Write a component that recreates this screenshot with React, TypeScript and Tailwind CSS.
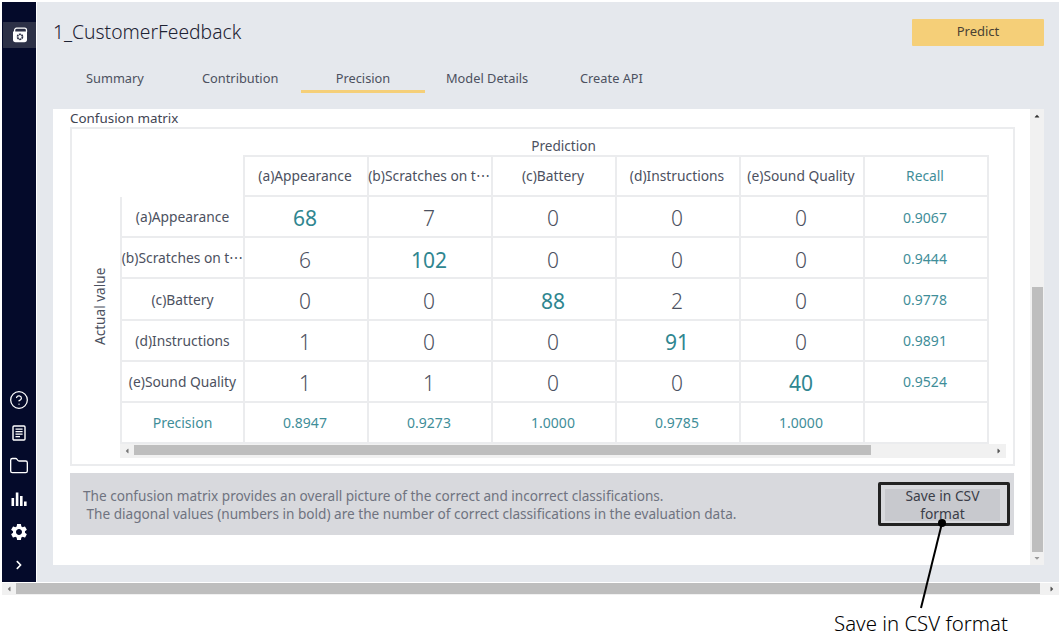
import { CircleHelp, Folder } from "lucide-react"
import { FaCaretDown, FaCaretLeft, FaCaretRight, FaCaretUp, FaChevronRight } from "react-icons/fa"
import { MdSettings } from "react-icons/md"

const labels = ["(a)Appearance", "(b)Scratches on t⋯", "(c)Battery", "(d)Instructions", "(e)Sound Quality"]
const matrix = [
  [68, 7, 0, 0, 0],
  [6, 102, 0, 0, 0],
  [0, 0, 88, 2, 0],
  [1, 0, 0, 91, 0],
  [1, 1, 0, 0, 40],
]
const recall = ["0.9067", "0.9444", "0.9778", "0.9891", "0.9524"]
const precision = ["0.8947", "0.9273", "1.0000", "0.9785", "1.0000"]

function ModelIcon() {
  return (
    <svg width="16" height="16" viewBox="0 0 16 16">
      <path d="M2.6 5 V3.4 A2 2 0 0 1 4.6 1.2 H12.5 A2 2 0 0 1 14.5 3.2 V5" fill="none" stroke="#fff" strokeWidth="1.3" />
      <path d="M1 4.4 H15 V12.6 a2.6 2.6 0 0 1 -2.6 2.6 H3.6 A2.6 2.6 0 0 1 1 12.6 Z" fill="#fff" />
      <circle cx="8" cy="9.8" r="2.5" fill="none" stroke="#2d3147" strokeWidth="1.7" strokeDasharray="2 0.6" />
    </svg>
  )
}

function NotesIcon() {
  return (
    <svg width="16" height="16" viewBox="0 0 16 16" fill="none" stroke="#fff">
      <rect x="2" y="1" width="12" height="14" rx="1" strokeWidth="1.4" />
      <path d="M4.5 4.2 H11.6 M4.5 6.7 H11.6 M4.5 9.2 H11.6 M4.5 11.7 H9" strokeWidth="1.3" />
    </svg>
  )
}

function BarsIcon() {
  return (
    <svg width="16" height="16" viewBox="0 0 16 16" fill="#fff">
      <rect x="0.5" y="7" width="2.6" height="8" />
      <rect x="4.8" y="1.5" width="2.6" height="13.5" />
      <rect x="9" y="5" width="2.6" height="10" />
      <rect x="13" y="10.5" width="2.6" height="4.5" />
    </svg>
  )
}

function NavSlot({ children }: { children: React.ReactNode }) {
  return <div className="h-[33px] flex items-center justify-center">{children}</div>
}

function Sidebar() {
  return (
    <div className="w-[34px] shrink-0 flex flex-col bg-[#040a2a] mr-[1px]">
      <div className="mt-[20px] h-[26px] w-[33px] ml-[1px] bg-[#2d3147] flex items-center justify-center">
        <ModelIcon />
      </div>
      <div className="mt-auto pb-[1px] flex flex-col items-center">
        <NavSlot><CircleHelp size={20} color="#fff" strokeWidth={1.5} /></NavSlot>
        <NavSlot><NotesIcon /></NavSlot>
        <NavSlot><Folder size={20} color="#fff" strokeWidth={1.6} /></NavSlot>
        <NavSlot><BarsIcon /></NavSlot>
        <NavSlot><MdSettings size={20} color="#fff" /></NavSlot>
        <NavSlot><FaChevronRight size={10} color="#fff" /></NavSlot>
      </div>
    </div>
  )
}

function Cell({ children, className = "" }: { children?: React.ReactNode; className?: string }) {
  return (
    <div className={`w-[124px] h-full shrink-0 flex items-center justify-center border-r-2 border-[#ebecee] whitespace-nowrap pr-[2px] ${className}`}>
      {children}
    </div>
  )
}

function MatrixTable() {
  return (
    <div>
      <div className="flex h-[42px]">
        <div className="w-[125px] shrink-0" />
        <div className="flex border-t-2 border-b-2 border-l-2 border-[#ebecee] text-[13.8px] text-[#4c5160] h-full -ml-[2px]">
          {labels.map((h) => (
            <Cell key={h}>{h}</Cell>
          ))}
          <Cell className="text-[#3f8e99]">Recall</Cell>
        </div>
      </div>
      {matrix.map((row, i) => (
        <div key={labels[i]} className="flex h-[41.2px] border-b-2 border-l-2 border-[#ebecee] w-[869px]">
          <div className="w-[123px] h-full shrink-0 flex items-center justify-center border-r-2 border-[#ebecee] text-[13.8px] text-[#4c5160] whitespace-nowrap pt-[2px]">
            {labels[i]}
          </div>
          {row.map((v, j) => (
            <Cell key={j} className={i === j ? "text-[21px] text-[#2f8690] pt-[5px]" : "text-[21px] font-light text-[#4c5160] pt-[5px]"}>
              {v}
            </Cell>
          ))}
          <Cell className="text-[14px] text-[#3f8e99] pt-[1px]">{recall[i]}</Cell>
        </div>
      ))}
      <div className="flex h-[41.2px] border-l-2 border-b-2 border-[#ebecee] w-[869px] text-[14px] text-[#3f8e99]">
        <div className="w-[123px] h-full shrink-0 flex items-center justify-center border-r-2 border-[#ebecee]">Precision</div>
        {precision.map((p, i) => (
          <Cell key={i}>{p}</Cell>
        ))}
        <Cell />
      </div>
    </div>
  )
}

function HScroll({ className = "", thumb }: { className?: string; thumb: string }) {
  return (
    <div className={`flex items-center bg-[#f1f1f1] ${className}`}>
      <div className="w-[14px] shrink-0 flex justify-center text-[#777]">
        <FaCaretLeft size={8} />
      </div>
      <div className="flex-1 h-full">
        <div className={`bg-[#bebebe] ${thumb}`} />
      </div>
      <div className="w-[14px] shrink-0 flex justify-center text-[#555]">
        <FaCaretRight size={8} />
      </div>
    </div>
  )
}

export default function App() {
  return (
    <div className="relative w-[1061px] h-[633px] overflow-hidden bg-white pt-[2px] pl-[2px] pr-[2px] font-['Noto_Sans','Open_Sans',sans-serif]">
      <div className="flex h-[580px]">
        <Sidebar />
        <div className="flex-1 min-w-0 bg-[#e5e8ed] pl-[16px] pr-[15px] flex flex-col">
          {/* header row */}
          <div className="flex items-center justify-between h-[60px] shrink-0">
            <h1 className="text-[19.3px] font-light text-[#1d2233]">1_CustomerFeedback</h1>
            <button className="w-[132px] h-[27px] bg-[#f5cf78] rounded-[1px] text-[13px] text-[#4a4234]">Predict</button>
          </div>
          {/* tabs */}
          <div className="flex h-[47px] shrink-0 text-[12.8px] text-[#4c5160]">
            <div className="w-[124px] pl-[33px] pt-[7px]">Summary</div>
            <div className="w-[124px] pl-[25px] pt-[7px]">Contribution</div>
            <div className="w-[124px] h-[31px] border-b-[3px] border-[#f5cf78] flex justify-center pt-[7px]">Precision</div>
            <div className="w-[155px] pl-[21px] pt-[7px]">Model Details</div>
            <div className="pt-[7px]">Create API</div>
          </div>
          {/* panel */}
          <div className="flex h-[456px] bg-white shrink-0">
            <div className="flex-1 pl-[17px] pr-[15px] min-w-0">
              <div className="h-[18px] text-[13.4px] leading-[19px] text-[#3f4452]">Confusion matrix</div>
              <div className="h-[339px] border-2 border-[#ebecee] pl-[48px] pr-[6px]">
                <div className="h-[26px] pt-[7px] text-[13.6px] leading-[20px] text-[#4c5160] text-center">Prediction</div>
                <div className="relative">
                  <div className="absolute left-[-30px] top-[28px] h-[247px] flex items-center justify-center [writing-mode:vertical-rl] rotate-180 text-[13.6px] text-[#4c5160]">
                    Actual value
                  </div>
                  <div className="overflow-hidden w-[886px]">
                    <MatrixTable />
                    <HScroll className="h-[14px]" thumb="w-[85.9%] h-[10px] mt-[1px]" />
                  </div>
                </div>
              </div>
              <div className="mt-[7px] mr-[1px] h-[62px] bg-[#d8d9dd] flex items-center justify-between pl-[13px] pr-[14px] pt-[1px]">
                <p className="text-[13.62px] leading-[18px] text-[#6f7380] whitespace-pre">
                  {"The confusion matrix provides an overall picture of the correct and incorrect classifications.\n The diagonal values (numbers in bold) are the number of correct classifications in the evaluation data."}
                </p>
                <button className="w-[115px] h-[32px] bg-[#c8c9ce] text-[13.8px] leading-[18px] text-[#3a3d48] flex items-center justify-center text-center">
                  Save in CSV format
                </button>
              </div>
            </div>
            {/* panel scrollbar */}
            <div className="w-[14px] shrink-0 bg-[#f1f1f1] flex flex-col items-center">
              <div className="h-[14px] flex items-center text-[#333]"><FaCaretUp size={8} /></div>
              <div className="flex-1 w-[11px]">
                <div className="mt-[164px] h-[265px] bg-[#bebebe]" />
              </div>
              <div className="h-[14px] flex items-center text-[#999]"><FaCaretDown size={8} /></div>
            </div>
          </div>
        </div>
      </div>
      <HScroll className="h-[12px] mt-[1px]" thumb="w-[99.5%] h-[11px]" />

      {/* callout over the screenshot */}
      <div className="absolute left-[878px] top-[482px] w-[132px] h-[44px] border-[3px] border-[#222] rounded-[2px]" />
      <svg className="absolute left-[900px] top-[515px]" width="60" height="100" viewBox="0 0 60 100">
        <circle cx="42" cy="8" r="4" fill="#000" />
        <line x1="42" y1="8" x2="21" y2="93" stroke="#000" strokeWidth="2" />
      </svg>
      <div className="absolute left-[834px] top-[613px] text-[20.4px] leading-[20px] font-light text-black whitespace-nowrap">Save in CSV format</div>
    </div>
  )
}
